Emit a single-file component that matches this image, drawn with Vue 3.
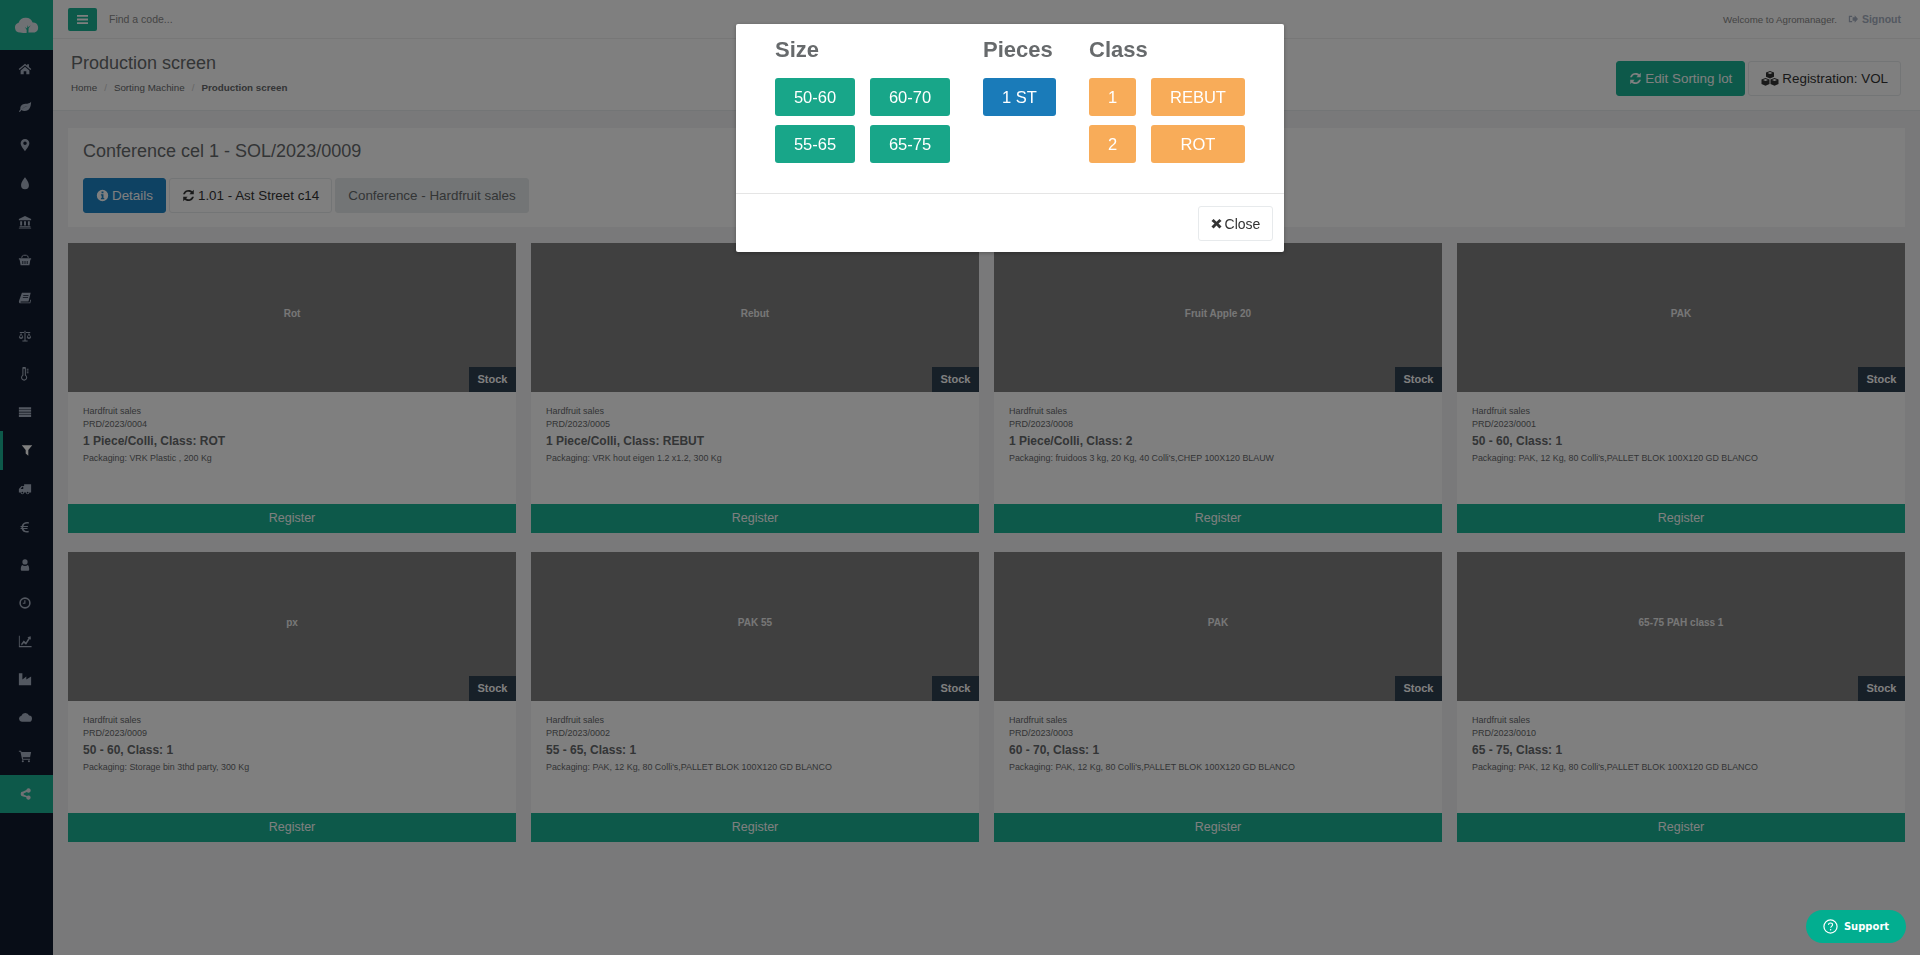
<template>
  <div class="app">
    <aside class="sidebar">
      <div class="logo">
        <svg viewBox="0 0 26 16" width="26" height="16"><path fill-rule="evenodd" d="M6 15.500a5 5 0 0 1-1.400-9.800A7.500 7.500 0 0 1 12 .8c3.300 0 5.600 2 6.600 4.600a5.200 5.200 0 0 1 2 10.100h-6.200l.2-4.200 2.200-3-2.600 2-.4-2.400-.8 3.600-2-1.400 1.700 2.800-.1 3.600z" /></svg>
      </div>
      <a v-for="(item, i) in navIcons" :key="i" class="nav-item" :class="{ current: i === 10, active: i === 19 }">
        <svg viewBox="0 0 16 16" width="14" height="14"><path fill-rule="evenodd" :d="item" /></svg>
      </a>
    </aside>

    <div class="main">
      <header class="topbar">
        <div class="menu-btn">
          <svg viewBox="0 0 12 12" width="11" height="11"><path d="M0 1h12v2H0zM0 5h12v2H0zM0 9h12v2H0z" /></svg>
        </div>
        <span class="search">Find a code...</span>
        <span class="welcome">Welcome to Agromanager.</span>
        <span class="signout">
          <svg viewBox="0 0 12 12" width="10" height="10"><path d="M1 2h4v1.500H2.500v5H5V10H1zM5.500 4H8V1.500L12 6 8 10.500V8H5.500z" /></svg>
          Signout
        </span>
      </header>

      <section class="heading">
        <div>
          <h2>Production screen</h2>
          <ol class="crumbs">
            <li>Home</li>
            <li class="sep">/</li>
            <li>Sorting Machine</li>
            <li class="sep">/</li>
            <li><b>Production screen</b></li>
          </ol>
        </div>
        <div class="heading-actions">
          <button class="btn primary">
            <svg class="ico" viewBox="0 0 16 16"><path :d="refresh" /></svg>
            Edit Sorting lot
          </button>
          <button class="btn plain">
            <svg class="ico cubes" viewBox="0 0 18 16"><path fill-rule="evenodd" d="M9 0l4 1.500v4.300l-4 1.700-4-1.700V1.500zM6.500 2L9 3l2.500-1L9 1zM4.500 7l4 1.500v4.500l-4 1.800L.5 13V8.500zM2 9l2.500 1L7 9 4.500 8zM13.500 7l4 1.500v4.500l-4 1.800-4-1.800V8.500zM11 9l2.500 1L16 9l-2.500-1z" /></svg>
            Registration: VOL
          </button>
        </div>
      </section>

      <div class="content">
        <section class="lot">
          <h3>Conference cel 1 - SOL/2023/0009</h3>
          <div class="lot-actions">
            <button class="btn info">
              <svg class="ico" viewBox="0 0 16 16"><path fill-rule="evenodd" d="M8 1a7 7 0 1 0 0 14A7 7 0 0 0 8 1zM6.800 3h2.400v2.200H6.800zM6 6.500h3.200V11h1v1.500H6V11h1V8H6z" /></svg>
              Details
            </button>
            <button class="btn plain">
              <svg class="ico" viewBox="0 0 16 16"><path :d="refresh" /></svg>
              1.01 - Ast Street c14
            </button>
            <button class="btn muted">Conference - Hardfruit sales</button>
          </div>
        </section>

        <div class="grid">
          <article v-for="card in cards" :key="card.code" class="card">
            <div class="thumb">
              <span class="thumb-label">{{ card.label }}</span>
              <span class="stock">Stock</span>
            </div>
            <div class="card-body">
              <small>Hardfruit sales</small>
              <small>{{ card.code }}</small>
              <h4>{{ card.title }}</h4>
              <small class="pack">Packaging: {{ card.pack }}</small>
            </div>
            <div class="register">Register</div>
          </article>
        </div>
      </div>
    </div>

    <div class="backdrop"></div>

    <div class="modal">
      <div class="modal-body">
        <div class="group">
          <h3>Size</h3>
          <div class="options two">
            <button v-for="s in sizes" :key="s" class="opt green">{{ s }}</button>
          </div>
        </div>
        <div class="group">
          <h3>Pieces</h3>
          <div class="options">
            <button class="opt blue">1 ST</button>
          </div>
        </div>
        <div class="group">
          <h3>Class</h3>
          <div class="options class-grid">
            <button v-for="c in classes" :key="c" class="opt orange">{{ c }}</button>
          </div>
        </div>
      </div>
      <div class="modal-footer">
        <button class="close">
          <svg viewBox="0 0 12 12" width="11" height="11"><path d="M2.800 1L6 4.200 9.200 1 11.500 3.300 8.200 6l3.300 3.200-2.300 2.300L6 8.200l-3.200 3.300L.5 9.200 3.800 6 .5 3.300z" /></svg>
          Close
        </button>
      </div>
    </div>

    <div class="support">
      <svg viewBox="0 0 16 16" width="15" height="15"><circle cx="8" cy="8" r="7" fill="none" stroke="#fff" stroke-width="1.300" /><path d="M5.800 6.300C5.900 5 6.900 4.300 8 4.300c1.300 0 2.200.8 2.200 1.900 0 1.700-2 1.600-2 3.200" fill="none" stroke="#fff" stroke-width="1.200" /><circle cx="8.100" cy="11.400" r=".8" fill="#fff" /></svg>
      Support
    </div>
  </div>
</template>

<script setup>
const refresh =
  "M14.500 1v5.500H9l2-2A4.600 4.600 0 0 0 3.600 6.500H1.300A7 7 0 0 1 12.700 2.800zM1.500 15V9.500H7l-2 2a4.600 4.600 0 0 0 7.400-2h2.300a7 7 0 0 1-11.400 3.700z";

const navIcons = [
  // home
  "M8 2L.8 8l1 1.100L8 4l6.200 5.100 1-1.100L12.500 5.800V2.500h-2v1.600zM3 9.700L8 5.500l5 4.200V14H9.500v-3.500h-3V14H3z",
  // leaf
  "M15 2c-.3 6-1.800 10.500-7.500 10.500-1.500 0-2.700-.4-3.600-1L2.200 13.800 1 13l1.800-2.300C2 7.500 4.500 4.300 8.500 4.300c3 0 5-.6 6.500-2.300zM4.500 10.500C6 8.500 8 7.500 11 7c-2.500 0-5 1-6.500 3.500z",
  // map marker
  "M8 1a5 5 0 0 0-5 5c0 3.200 5 9 5 9s5-5.800 5-9a5 5 0 0 0-5-5zm0 7a2 2 0 1 1 0-4 2 2 0 0 1 0 4z",
  // tint
  "M8 1.500S3.500 7 3.500 10.500a4.500 4.500 0 0 0 9 0C12.500 7 8 1.500 8 1.500z",
  // bank
  "M8 1L1 4.500V6h14V4.500zM2.500 7h2.200v5H2.500zM6.900 7h2.200v5H6.900zM11.300 7h2.200v5h-2.200zM1.800 12.800h12.400V14H1.800zM1 14.500h14V15.500H1z",
  // basket
  "M1 6h14v1.500h-.8L13 14H3L1.800 7.500H1zM5 9v3.500h1V9zM7.500 9v3.500h1V9zM10 9v3.500h1V9zM3.500 5.500L5 2h1.200L4.800 5.500zM12.500 5.500L11 2H9.800l1.400 3.500zM5 2h6v1.200H5z",
  // book
  "M4.500 2h10l-2.500 10H3.500c-.8 0-1 1-.2 1h10l.7-3h1l-1 4H3c-1.800 0-2.300-1.500-1.800-3zM6 4.500v1h6v-1zM5.500 7v1h6V7z",
  // balance scale
  "M7.400 2h1.200v11H11v1.200H5V13h2.400zM2 3.500h12v1H2zM3.500 4.500L6 9.500a2.600 2.600 0 0 1-5 0zM3.500 6.200L2 9.500h3zM12.500 4.500L15 9.500a2.600 2.600 0 0 1-5 0zM12.500 6.200L11 9.500h3z",
  // thermometer
  "M5 1.500a2 2 0 0 1 4 0v7.700a3.500 3.500 0 1 1-4 0zM6.200 2v7.800a2.300 2.300 0 1 0 1.600 0V2zM10 2h2v1h-2zM10 4h2v1h-2zM10 6h2v1h-2z",
  // list
  "M1 2.500h14v2.300H1zM1 5.500h14v2.300H1zM1 8.500h14v2.300H1zM1 11.500h14v2.300H1z",
  // filter
  "M2 2.500h12L9.500 8v6.500l-3-2.500V8z",
  // truck
  "M15 2.500v9.500h-2a2 2 0 0 1-4 0H7a2 2 0 0 1-4 0H1V8l3-3.500h3v-2zM5 5.500L3 8h3V5.500zM5 11a1 1 0 1 0 0 2 1 1 0 0 0 0-2zM11 11a1 1 0 1 0 0 2 1 1 0 0 0 0-2z",
  // euro
  "M12.500 2.500l-.4 1.900C9.500 3.600 7 4.600 6.300 6.800h5.200l-.3 1.200h-5.200v1h5l-.3 1.200H6.400c.8 2 3.200 2.800 5.600 2l.4 1.800C8.600 15 5 13.500 4.200 10.200H2.800l.3-1.200h.9V8H2.800l.3-1.200h1.100C5.200 3 9 1.500 12.500 2.500z",
  // user
  "M8 1.500a3 3 0 1 1 0 6 3 3 0 0 1 0-6zM4.800 8c.8.6 2 1 3.200 1s2.400-.4 3.200-1c1.200.6 1.600 3 1.600 5 0 1-.7 1.500-1.400 1.500H4.600c-.7 0-1.400-.5-1.400-1.500 0-2 .4-4.400 1.600-5z",
  // clock
  "M8 1.500a6.500 6.500 0 1 1 0 13 6.500 6.500 0 0 1 0-13zM8 3.300a4.700 4.700 0 1 0 0 9.400 4.700 4.700 0 0 0 0-9.400zM7.200 4.800h1.300v4H5.500V7.600h1.700z",
  // line chart
  "M1 2h1v11.800h13.500V15H1zM3.500 11.500l3-4 2.500 2 3-5-1.300-.8 3.800-1.200.2 4-1.200-.7-4.300 6.400-2.500-2-2.500 3z",
  // industry
  "M1 1.500h4v7l4.500-3.500v3.500L15 5v10H1z",
  // cloud
  "M4.500 13.500a3.500 3.500 0 0 1-.6-6.900A4.700 4.700 0 0 1 12.700 6.300 3.600 3.600 0 0 1 12 13.500z",
  // cart
  "M1 2h2.500l.5 1.500h11l-1.200 6H5.500l.3 1.500h8v1.200H4.700L2.800 3.200H1zM5.500 12.800a1.200 1.200 0 1 1 0 2.400 1.200 1.200 0 0 1 0-2.400zM12.500 12.800a1.200 1.200 0 1 1 0 2.400 1.200 1.200 0 0 1 0-2.400z",
  // share
  "M12 1.500a2.500 2.500 0 1 1-1.900 4.100L6.400 7.400a2.500 2.500 0 0 1 0 1.200l3.700 1.800a2.500 2.500 0 1 1-.6 1.200L5.800 10.800a2.500 2.500 0 1 1 0-5.600l3.700-1.800A2.500 2.500 0 0 1 12 1.500z",
];

const sizes = ["50-60", "60-70", "55-65", "65-75"];
const classes = ["1", "REBUT", "2", "ROT"];

const pak = "PAK, 12 Kg, 80 Colli's,PALLET BLOK 100X120 GD BLANCO";

const cards = [
  { label: "Rot", code: "PRD/2023/0004", title: "1 Piece/Colli, Class: ROT", pack: "VRK Plastic , 200 Kg" },
  { label: "Rebut", code: "PRD/2023/0005", title: "1 Piece/Colli, Class: REBUT", pack: "VRK hout eigen 1.2 x1.2, 300 Kg" },
  { label: "Fruit Apple 20", code: "PRD/2023/0008", title: "1 Piece/Colli, Class: 2", pack: "fruidoos 3 kg, 20 Kg, 40 Colli's,CHEP 100X120 BLAUW" },
  { label: "PAK", code: "PRD/2023/0001", title: "50 - 60, Class: 1", pack: pak },
  { label: "px", code: "PRD/2023/0009", title: "50 - 60, Class: 1", pack: "Storage bin 3thd party, 300 Kg" },
  { label: "PAK 55", code: "PRD/2023/0002", title: "55 - 65, Class: 1", pack: pak },
  { label: "PAK", code: "PRD/2023/0003", title: "60 - 70, Class: 1", pack: pak },
  { label: "65-75 PAH class 1", code: "PRD/2023/0010", title: "65 - 75, Class: 1", pack: pak },
];
</script>

<style>
html,
body {
  margin: 0;
  height: 100%;
  overflow: hidden;
}
</style>

<style scoped>
.app {
  display: flex;
  height: 955px;
  overflow: hidden;
  font-family: "Liberation Sans", Arial, sans-serif;
  color: #676a6c;
  background: #f3f3f4;
}

button {
  font-family: inherit;
}

.sidebar {
  flex: 0 0 53px;
  background: #111a2e;
  color: #a7b1c2;
}
.logo {
  height: 50px;
  background: #1ab394;
  color: #dfe3e8;
  display: flex;
  align-items: center;
  justify-content: center;
}
.logo svg {
  fill: currentColor;
}
.nav-item {
  height: 38.15px;
  display: flex;
  align-items: center;
  padding-left: 18px;
  box-sizing: border-box;
}
.nav-item svg {
  fill: currentColor;
}
.nav-item.current {
  border-left: 3px solid #1ab394;
  padding-left: 17px;
  color: #fff;
}
.nav-item.active {
  background: #1ab394;
  color: #dfe3e8;
}

.main {
  flex: 1;
  min-width: 0;
}

.topbar {
  height: 38px;
  background: #fff;
  border-bottom: 1px solid #eeeeee;
  display: flex;
  align-items: center;
  padding: 0 19px 0 15px;
}
.menu-btn {
  width: 29px;
  height: 23px;
  background: #1ab394;
  border-radius: 2px;
  color: #fff;
  display: flex;
  align-items: center;
  justify-content: center;
}
.menu-btn svg,
.signout svg {
  fill: currentColor;
}
.search {
  margin-left: 12px;
  font-size: 10.500px;
  color: #8a8a8a;
}
.welcome {
  margin-left: auto;
  font-size: 9.700px;
  color: #888;
}
.signout {
  margin-left: 11px;
  font-size: 10.500px;
  font-weight: bold;
  color: #a7b1c2;
  display: flex;
  align-items: center;
  gap: 4px;
}

.heading {
  height: 72px;
  box-sizing: border-box;
  background: #fff;
  border-bottom: 1px solid #e7eaec;
  padding: 0 19px 0 18px;
  display: flex;
  justify-content: space-between;
}
.heading h2 {
  margin: 14px 0 0;
  font-size: 18px;
  font-weight: 400;
  line-height: 20px;
}
.crumbs {
  list-style: none;
  margin: 8px 0 0;
  padding: 0;
  display: flex;
  font-size: 9.800px;
  line-height: 14px;
}
.crumbs .sep {
  color: #ccc;
  margin: 0 7px;
}
.heading-actions {
  display: flex;
  gap: 3px;
  margin-top: 22px;
}

.btn {
  height: 35px;
  box-sizing: border-box;
  padding: 0 12px;
  font-size: 13.400px;
  border-radius: 3px;
  border: 1px solid transparent;
  display: inline-flex;
  align-items: center;
  gap: 3px;
  white-space: nowrap;
}
.ico {
  width: 13px;
  height: 13px;
  fill: currentColor;
}
.ico.cubes {
  width: 18px;
  height: 16px;
}
.btn.primary {
  background: #1ab394;
  border-color: #1ab394;
  color: #fff;
}
.btn.plain {
  background: #fff;
  border-color: #e7eaec;
  color: #333;
}
.btn.info {
  background: #1c84c6;
  border-color: #1c84c6;
  color: #fff;
}
.btn.muted {
  background: #e7eaec;
  border-color: #e7eaec;
  color: #676a6c;
}

.content {
  padding: 17px 15px 0;
}
.lot {
  background: #fff;
  height: 99px;
  box-sizing: border-box;
  padding: 0 15px;
}
.lot h3 {
  margin: 0;
  padding-top: 13px;
  font-size: 18px;
  font-weight: 400;
  line-height: 20px;
}
.lot-actions {
  display: flex;
  gap: 3px;
  margin-top: 17px;
}

.grid {
  display: grid;
  grid-template-columns: repeat(4, 448px);
  column-gap: 15px;
  row-gap: 19px;
  margin-top: 16px;
}
.card {
  background: #fff;
}
.thumb {
  height: 149px;
  box-sizing: border-box;
  padding-bottom: 8px;
  background: #808080;
  position: relative;
  display: flex;
  align-items: center;
  justify-content: center;
}
.thumb-label {
  font-size: 10px;
  font-weight: bold;
  color: #eee;
}
.stock {
  position: absolute;
  right: 0;
  bottom: 0;
  width: 47px;
  height: 25px;
  line-height: 25px;
  text-align: center;
  background: #2f4050;
  color: #fff;
  font-size: 11px;
  font-weight: bold;
}
.card-body {
  height: 112px;
  box-sizing: border-box;
  padding: 13px 15px 0;
}
.card-body small {
  display: block;
  font-size: 9px;
  line-height: 13px;
}
.card-body h4 {
  margin: 2px 0 3px;
  font-size: 12px;
  line-height: 16px;
  font-weight: bold;
}
.card-body .pack {
  font-size: 8.900px;
  color: #676a6c;
}
.register {
  height: 29px;
  line-height: 29px;
  text-align: center;
  font-size: 12.500px;
  background: #1ab394;
  color: #fff;
}

.backdrop {
  position: fixed;
  inset: 0;
  background: rgba(0, 0, 0, 0.5);
}

.modal {
  position: fixed;
  top: 24px;
  left: 736px;
  width: 548px;
  background: #fff;
  border-radius: 2px;
  box-shadow: 0 1px 4px rgba(0, 0, 0, 0.3);
}
.modal-body {
  height: 170px;
  box-sizing: border-box;
  border-bottom: 1px solid #e5e5e5;
  padding: 0 39px;
  display: flex;
  gap: 33px;
}
.group h3 {
  margin: 0;
  padding-top: 13px;
  font-size: 22px;
  line-height: 26px;
  font-weight: bold;
  height: 41px;
  color: #676a6c;
}
.options {
  display: grid;
  gap: 9px 15px;
}
.options.two {
  grid-template-columns: 80px 80px;
}
.options.class-grid {
  grid-template-columns: 47px 94px;
}
.opt {
  height: 38px;
  min-width: 73px;
  box-sizing: border-box;
  border: 0;
  border-radius: 3px;
  font-size: 16.500px;
  color: #fff;
  padding: 0;
}
.class-grid .opt {
  min-width: 0;
}
.green {
  background: #18a689;
}
.blue {
  background: #1a7bb9;
}
.orange {
  background: #f8ac59;
}
.modal-footer {
  height: 58px;
  box-sizing: border-box;
  padding: 12px 11px 0 0;
  display: flex;
  justify-content: flex-end;
}
.close {
  width: 75px;
  height: 35px;
  box-sizing: border-box;
  background: #fff;
  border: 1px solid #e7eaec;
  border-radius: 3px;
  font-size: 14px;
  color: #333;
  display: inline-flex;
  align-items: center;
  justify-content: center;
  gap: 3px;
  padding: 0;
}
.close svg {
  fill: currentColor;
}

.support {
  position: fixed;
  right: 14px;
  bottom: 12px;
  width: 100px;
  height: 33px;
  box-sizing: border-box;
  border-radius: 17px;
  background: #02ae90;
  color: #fff;
  font-family: "DejaVu Sans", sans-serif;
  font-size: 10px;
  font-weight: bold;
  display: flex;
  align-items: center;
  justify-content: center;
  gap: 6px;
}
</style>
